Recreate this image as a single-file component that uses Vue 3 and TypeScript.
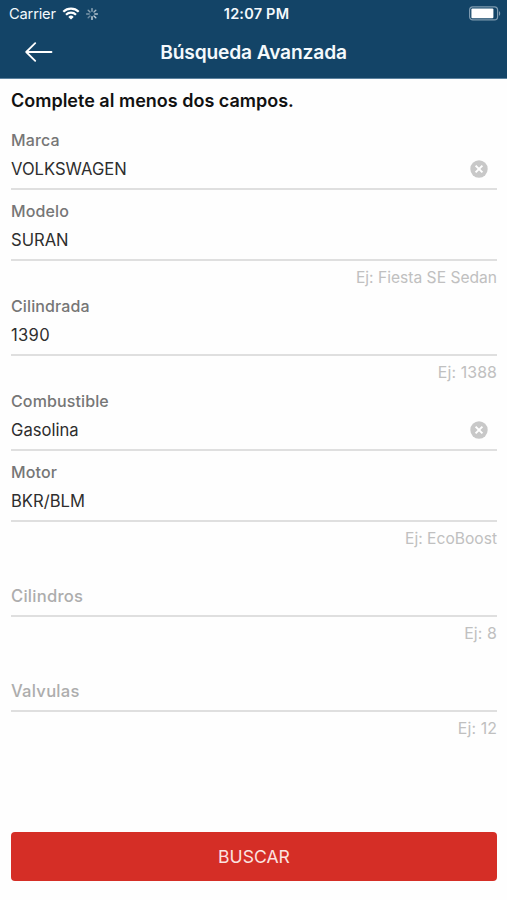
<script setup lang="ts">
import { ref } from 'vue'

interface Field {
  id: string
  label: string
  value: string
  hint?: string
  clearable?: boolean
}

const fields = ref<Field[]>([
  { id: 'marca', label: 'Marca', value: 'VOLKSWAGEN', clearable: true },
  { id: 'modelo', label: 'Modelo', value: 'SURAN', hint: 'Ej: Fiesta SE Sedan' },
  { id: 'cilindrada', label: 'Cilindrada', value: '1390', hint: 'Ej: 1388' },
  { id: 'combustible', label: 'Combustible', value: 'Gasolina', clearable: true },
  { id: 'motor', label: 'Motor', value: 'BKR/BLM', hint: 'Ej: EcoBoost' },
  { id: 'cilindros', label: 'Cilindros', value: '', hint: 'Ej: 8' },
  { id: 'valvulas', label: 'Valvulas', value: '', hint: 'Ej: 12' },
])

const spokes = [0, 45, 90, 135, 180, 225, 270, 315]

function clear(field: Field) {
  field.value = ''
}
</script>

<template>
  <div class="screen">
    <header class="header">
      <div class="status">
        <div class="status-left">
          <span class="carrier">Carrier</span>
          <svg class="wifi" width="18" height="13" viewBox="0 0 18 13" fill="none" stroke="#fff" stroke-width="2.2">
            <path d="M1.3 4.7a11 11 0 0 1 15.4 0" />
            <path d="M4 7.7a7.2 7.2 0 0 1 10 0" />
            <path d="M9 12.6 6.3 9.9a3.9 3.9 0 0 1 5.4 0z" fill="#fff" stroke="none" />
          </svg>
          <svg class="spinner" width="14" height="14" viewBox="-7 -7 14 14" stroke="#fff" stroke-width="1.4" stroke-linecap="round">
            <line
              v-for="(angle, i) in spokes"
              :key="angle"
              x1="0"
              y1="-2.8"
              x2="0"
              y2="-5.4"
              :transform="`rotate(${angle})`"
              :opacity="0.38 + ((i + 3) % 8) * 0.06"
            />
          </svg>
        </div>
        <span class="time">12:07 PM</span>
        <svg class="battery" width="33" height="15" viewBox="0 0 33 15">
          <rect x="1.6" y="0.9" width="28" height="13" rx="3.2" fill="none" stroke="#7f9bb0" stroke-width="1.2" />
          <rect x="3.4" y="2.6" width="22" height="9.6" rx="1" fill="#fff" />
          <path d="M31 5.2c1.6.6 1.6 3.9 0 4.5z" fill="#7f9bb0" />
        </svg>
      </div>
      <div class="navbar">
        <button class="back" type="button" aria-label="Volver">
          <svg width="28" height="20" viewBox="0 0 28 20" fill="none" stroke="#fff" stroke-width="1.8" stroke-linecap="round" stroke-linejoin="round">
            <path d="M1.2 10H26.5M10.2 1.2 1.2 10l9 8.8" />
          </svg>
        </button>
        <h1 class="title">Búsqueda Avanzada</h1>
      </div>
    </header>

    <main class="content">
      <h2 class="heading">Complete al menos dos campos.</h2>
      <section v-for="field in fields" :key="field.id" class="field">
        <div class="box" :class="{ empty: !field.value }">
          <span class="label">{{ field.label }}</span>
          <div v-if="field.value" class="row">
            <span class="value" :class="{ numeric: /^\d+$/.test(field.value) }">{{ field.value }}</span>
            <button v-if="field.clearable" class="clear" type="button" aria-label="Borrar" @click="clear(field)">
              <svg width="18" height="18" viewBox="0 0 18 18">
                <circle cx="9" cy="9" r="8.7" fill="#c8c8c8" />
                <path d="m5.6 5.6 6.8 6.8m0-6.8-6.8 6.8" stroke="#fff" stroke-width="2" />
              </svg>
            </button>
          </div>
        </div>
        <div v-if="field.hint" class="hint" :class="{ numeric: /\d$/.test(field.hint) }">{{ field.hint }}</div>
      </section>
    </main>

    <footer class="footer">
      <button class="submit" type="button">BUSCAR</button>
    </footer>
  </div>
</template>

<style>
body {
  margin: 0;
  background: #fefefe;
}
</style>

<style scoped>
.screen {
  display: flex;
  flex-direction: column;
  height: 900px;
  overflow: hidden;
  background: #fefefe;
  color: #2e2e2e;
  font-family: Inter, 'Liberation Sans', sans-serif;
}
button {
  padding: 0;
  border: 0;
  background: none;
  font: inherit;
}
svg {
  display: block;
}
.header {
  box-sizing: border-box;
  height: 79px;
  flex: none;
  background: #134467;
  border-bottom: 1px solid #5c829e;
  color: #f4f9fc;
}
.status {
  display: grid;
  grid-template-columns: 1fr auto 1fr;
  align-items: center;
  height: 27px;
  padding: 0 6px 0 9px;
}
.status-left {
  display: flex;
  align-items: center;
}
.carrier {
  width: 53px;
  font-size: 14.7px;
  letter-spacing: -0.2px;
}
.spinner {
  margin-left: 5px;
}
.time {
  margin-left: 3px;
  font-size: 14.5px;
  font-weight: 600;
  letter-spacing: 0.2px;
  white-space: nowrap;
}
.battery {
  justify-self: end;
}
.navbar {
  display: grid;
  grid-template-columns: 60px 1fr 60px;
  align-items: center;
  height: 49px;
}
.back {
  margin-left: 25px;
}
.title {
  margin: 0;
  text-align: center;
  font-size: 19.2px;
  font-weight: 600;
  letter-spacing: -0.15px;
  white-space: nowrap;
}
.content {
  flex: 1;
  padding: 0 10px 0 11px;
}
.heading {
  margin: 0;
  height: 39px;
  line-height: 43px;
  font-size: 18px;
  font-weight: 600;
  color: #111;
}
.box {
  box-sizing: border-box;
  height: 72px;
  margin-bottom: -1px;
  padding-top: 12px;
  border-bottom: 2px solid #dfdfdf;
}
.label {
  display: block;
  line-height: 20px;
  font-size: 16px;
  font-weight: 500;
  letter-spacing: 0.12px;
  color: #767676;
}
.empty {
  padding-top: 41px;
}
.empty .label {
  font-size: 16.6px;
  letter-spacing: 0.25px;
  color: #adadad;
}
.row {
  display: flex;
  align-items: center;
  justify-content: space-between;
  height: 20px;
  margin-top: 9px;
  padding-right: 9px;
}
.value {
  font-size: 16.6px;
}
.value.numeric {
  letter-spacing: 0.3px;
}
.hint {
  height: 24px;
  line-height: 35px;
  text-align: right;
  font-size: 15.6px;
  color: #c0c0c0;
}
.hint.numeric {
  font-size: 15.9px;
  letter-spacing: 0.1px;
}
.footer {
  height: 49px;
  padding: 0 10px 19px 11px;
}
.submit {
  display: block;
  width: 100%;
  height: 49px;
  border-radius: 4px;
  background: #d52e26;
  color: #fbe3e0;
  font-size: 17.6px;
}
</style>
